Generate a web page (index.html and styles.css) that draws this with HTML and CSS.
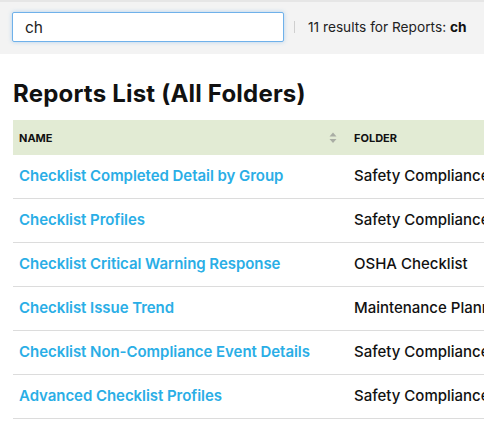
FILE: index.html
```html
<!DOCTYPE html>
<html>
<head>
<meta charset="utf-8">
<link rel="stylesheet" href="styles.css">
</head>
<body>
<div class="topbar">
  <div class="search"><span class="search-text">ch</span></div>
  <div class="sep"></div>
  <div class="results">11 results for Reports: <b>ch</b></div>
</div>
<div class="content">
  <h1 class="title">Reports List (All Folders)</h1>
  <table class="reports">
    <thead>
      <tr>
        <th class="col-name"><div class="th-inner"><span>NAME</span>
          <svg class="sort" width="8" height="12" viewBox="0 0 8 12"><path d="M4 0.5 L7.5 4.5 L0.5 4.5 Z" fill="#a9ada4"/><path d="M0.5 7 L7.5 7 L4 11 Z" fill="#a9ada4"/></svg></div></th>
        <th class="col-folder">FOLDER</th>
      </tr>
    </thead>
    <tbody>
      <tr><td><a>Checklist Completed Detail by Group</a></td><td class="folder">Safety Compliance</td></tr>
      <tr><td><a>Checklist Profiles</a></td><td class="folder">Safety Compliance</td></tr>
      <tr><td><a>Checklist Critical Warning Response</a></td><td class="folder">OSHA Checklist</td></tr>
      <tr><td><a>Checklist Issue Trend</a></td><td class="folder">Maintenance Planning</td></tr>
      <tr><td><a>Checklist Non-Compliance Event Details</a></td><td class="folder">Safety Compliance</td></tr>
      <tr><td><a>Advanced Checklist Profiles</a></td><td class="folder">Safety Compliance</td></tr>
    </tbody>
  </table>
</div>
</body>
</html>
```
FILE: styles.css
```css
html, body {
  margin: 0;
  padding: 0;
  background: #ffffff;
  overflow: hidden;
}
body {
  font-family: "Inter", "Open Sans", sans-serif;
  color: #111;
  width: 484px;
  height: 429px;
}
.topbar {
  display: flex;
  align-items: flex-start;
  box-sizing: border-box;
  height: 54px;
  background: #f3f3f3;
  border-top: 2px solid #e6e6e6;
  padding: 10px 0 0 12px;
}
.search {
  box-sizing: border-box;
  width: 272px;
  height: 30px;
  background: #fff;
  border: 1px solid #6fb1ea;
  border-radius: 2px;
  box-shadow: 0 0 4px rgba(100, 170, 230, 0.45);
  display: flex;
  align-items: center;
  padding-left: 12px;
}
.search-text {
  font-size: 15.5px;
  color: #222;
}
.sep {
  width: 1px;
  height: 12px;
  background: #cfcfcf;
  margin: 9px 13px 0 10px;
}
.results {
  font-size: 13.7px;
  line-height: 30px;
  color: #222;
}
.results b {
  font-weight: 700;
  color: #111;
}
.content {
  padding-left: 13px;
}
.title {
  margin: 25px 0 12px 0;
  font-size: 24px;
  line-height: 29px;
  font-weight: 700;
  color: #111;
  letter-spacing: 0.2px;
}
.reports {
  border-collapse: collapse;
  width: 560px;
  table-layout: fixed;
}
.reports th {
  background: #e2ebd4;
  height: 35px;
  text-align: left;
  font-size: 11px;
  font-weight: 700;
  color: #111;
  padding: 0;
}
.col-name {
  width: 335px;
}
.th-inner {
  display: flex;
  align-items: center;
  justify-content: space-between;
  padding-left: 6px;
  padding-right: 11px;
}
.sort {
  display: block;
  margin-top: 1px;
}
.reports th.col-folder {
  padding-left: 6px;
}
.reports td {
  height: 41px;
  border-bottom: 1px solid #dcdcdc;
  padding: 0 0 2px 6px;
  font-size: 15px;
  white-space: nowrap;
  overflow: hidden;
}
.reports a {
  color: #2aaee6;
  font-weight: 600;
  text-decoration: none;
  letter-spacing: -0.05px;
}
.reports td.folder {
  color: #111;
  font-weight: 500;
}
```
